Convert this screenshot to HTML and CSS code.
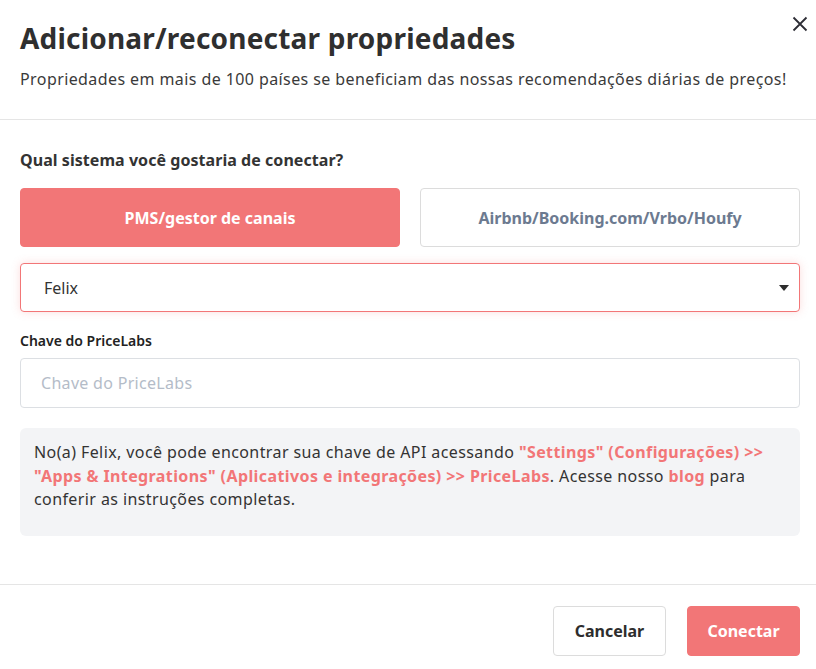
FILE: index.html
```html
<!DOCTYPE html>
<html lang="pt">
<head>
<meta charset="utf-8">
<link rel="stylesheet" href="styles.css">
</head>
<body>
<div class="modal">
  <header class="head">
    <h1 class="title">Adicionar/reconectar propriedades</h1>
    <p class="subtitle">Propriedades em mais de 100 países se beneficiam das nossas recomendações diárias de preços!</p>
    <button class="close" aria-label="Fechar">
      <svg width="16" height="16" viewBox="0 0 16 16"><path d="M1.5 1.5 L14.5 14.5 M14.5 1.5 L1.5 14.5" stroke="#2d2d35" stroke-width="1.8" fill="none"/></svg>
    </button>
  </header>
  <section class="body">
    <div class="question">Qual sistema você gostaria de conectar?</div>
    <div class="choices">
      <button class="choice active">PMS/gestor de canais</button>
      <button class="choice">Airbnb/Booking.com/Vrbo/Houfy</button>
    </div>
    <div class="select">
      <span>Felix</span>
      <svg width="10" height="6" viewBox="0 0 10 6"><path d="M0 0 H10 L5 6 Z" fill="#2d2d2d"/></svg>
    </div>
    <label class="label">Chave do PriceLabs</label>
    <div class="input">Chave do PriceLabs</div>
    <div class="info">No(a) Felix, você pode encontrar sua chave de API acessando <b>"Settings" (Configurações) &gt;&gt; "Apps &amp; Integrations" (Aplicativos e integrações) &gt;&gt; PriceLabs</b>. Acesse nosso <b>blog</b> para conferir as instruções completas.</div>
  </section>
  <footer class="foot">
    <button class="btn">Cancelar</button>
    <button class="btn primary">Conectar</button>
  </footer>
</div>
</body>
</html>
```
FILE: styles.css
```css
* { box-sizing: border-box; }
html, body { margin: 0; padding: 0; background: #fff; }
body { font-family: "Noto Sans", Roboto, sans-serif; color: #333; }
.modal { width: 816px; height: 669px; display: flex; flex-direction: column; }
.head { position: relative; padding: 19px 20px 0; height: 120px; border-bottom: 1px solid #e5e5e5; }
.title { margin: 0; font-size: 28px; font-weight: 700; color: #2f2f2f; line-height: 38px; letter-spacing: 0.2px; }
.subtitle { margin: 10px 0 0; font-size: 16px; color: #3a3a3a; line-height: 24px; letter-spacing: 0.41px; }
.close { position: absolute; right: 8px; top: 16px; width: 16px; height: 16px; padding: 0; border: 0; background: none; }
.body { padding: 30px 16px 0 20px; height: 465px; border-bottom: 1px solid #e5e5e5; }
.question { font-size: 16px; font-weight: 700; color: #333; line-height: 20px; letter-spacing: 0.05px; }
.choices { display: grid; grid-template-columns: 380px 380px; gap: 20px; margin-top: 18px; }
.choice { height: 59px; border: 1px solid #dcdcdc; border-radius: 4px; background: #fff; font: 700 16px "Noto Sans", sans-serif; color: #6c7a90; }
.choice.active { background: #f27677; border-color: #f27677; color: #fff; }
.select { margin-top: 16px; width: 780px; height: 49px; border: 1px solid #f27677; border-radius: 4px; box-shadow: 0 0 8px rgba(242,118,119,.25); display: flex; align-items: center; justify-content: space-between; padding: 0 10px 0 23px; font-size: 16px; color: #333; }
.label { display: block; margin-top: 20px; font-size: 14px; font-weight: 600; color: #222; line-height: 18px; }
.input { margin-top: 8px; width: 780px; height: 50px; border: 1px solid #dcdfe3; border-radius: 4px; display: flex; align-items: center; padding-left: 20px; font-size: 16px; color: #b4bcc8; letter-spacing: 0.3px; }
.info { margin-top: 20px; width: 780px; height: 108px; background: #f3f4f6; border-radius: 6px; padding: 13px 14px; font-size: 16px; line-height: 23.5px; color: #333; letter-spacing: 0.4px; }
.info b { color: #f27677; }
.foot { display: flex; justify-content: flex-end; gap: 21px; padding: 21px 16px 0 0; }
.btn { width: 113px; height: 50px; border: 1px solid #dcdcdc; border-radius: 4px; background: #fff; font: 700 16px "Noto Sans", sans-serif; color: #2d2d2d; }
.btn.primary { background: #f27677; border-color: #f27677; color: #fff; }
```
